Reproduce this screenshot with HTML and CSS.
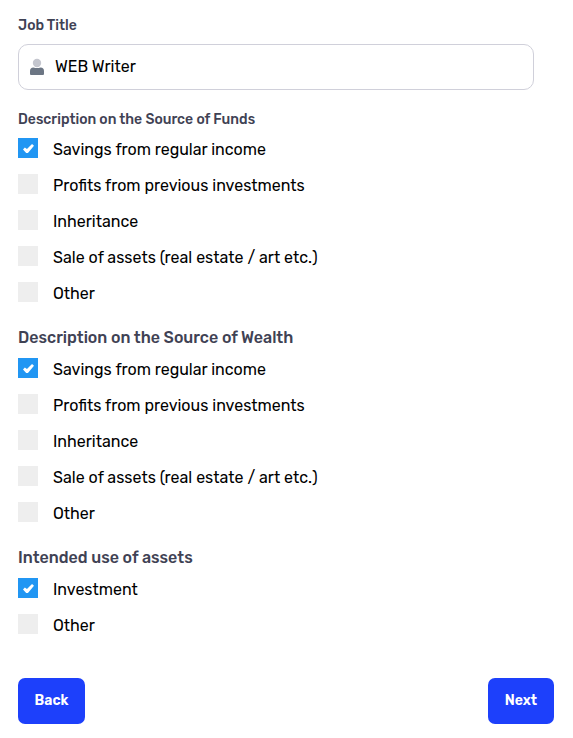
FILE: index.html
```html
<!DOCTYPE html>
<html lang="en">

<head>
<meta charset="UTF-8"/>
<meta name="viewport" content="width=device-width, initial-scale=1.0">
<title>Source of Funds</title>
<link rel="stylesheet" href="styles.css">
</head>

<body>
<form>
<label class="label small" for="job">Job Title</label>
<div class="field">
    <svg class="user" viewBox="0 0 16 18" aria-hidden="true">
        <circle class="head" cx="8" cy="5" r="4.200"/>
        <path class="torso" d="M1 16v-3a3.500 3.500 0 0 1 3.500-3.500q3.500 1 7 0a3.500 3.500 0 0 1 3.500 3.500v3q0 1-1 1H2q-1 0-1-1z"/>
    </svg>
    <input id="job" type="text" value="WEB Writer">
</div>

<fieldset class="funds">
    <legend class="label small">Description on the Source of Funds</legend>
    <label class="option"><input type="checkbox" checked><span>Savings from regular income</span></label>
    <label class="option"><input type="checkbox"><span>Profits from previous investments</span></label>
    <label class="option"><input type="checkbox"><span>Inheritance</span></label>
    <label class="option"><input type="checkbox"><span>Sale of assets (real estate / art etc.)</span></label>
    <label class="option"><input type="checkbox"><span>Other</span></label>
</fieldset>

<fieldset>
    <legend class="label">Description on the Source of Wealth</legend>
    <label class="option"><input type="checkbox" checked><span>Savings from regular income</span></label>
    <label class="option"><input type="checkbox"><span>Profits from previous investments</span></label>
    <label class="option"><input type="checkbox"><span>Inheritance</span></label>
    <label class="option"><input type="checkbox"><span>Sale of assets (real estate / art etc.)</span></label>
    <label class="option"><input type="checkbox"><span>Other</span></label>
</fieldset>

<fieldset>
    <legend class="label">Intended use of assets</legend>
    <label class="option"><input type="checkbox" checked><span>Investment</span></label>
    <label class="option"><input type="checkbox"><span>Other</span></label>
</fieldset>

<div class="buttons">
    <button type="button">Back</button>
    <button type="button">Next</button>
</div>
</form>
</body>

</html>
```
FILE: styles.css
```css
body {
    margin: 0;
    background: white;
    color: black;
    font-family: Rubik, Roboto, Arial, sans-serif;
    font-size: 16px;
}
form {
    padding: 16px 19px 0 18px;
}
.label {
    display: block;
    padding: 0;
    height: 20px;
    line-height: 20px;
    color: #3f4254;
    font-weight: 500;
}
.small {
    font-size: 14px;
}
.field {
    display: flex;
    align-items: center;
    box-sizing: border-box;
    width: 516px;
    height: 46px;
    margin-top: 8px;
    padding-left: 10px;
    border: 1px solid #d0d0da;
    border-radius: 10px;
}
.user {
    width: 16px;
    height: 18px;
}
.head {
    fill: #c4c6ce;
}
.torso {
    fill: #6c7684;
}
.field input {
    flex: 1;
    margin: 0 10px 0 10px;
    padding: 0 0 2px;
    border: 0;
    outline: 0;
    color: black;
    font: inherit;
}
fieldset {
    margin: 0 0 10px;
    padding: 0;
    border: 0;
}
legend {
    margin-bottom: 10px;
}
.funds {
    margin-top: 20px;
}
.funds legend {
    margin-bottom: 8px;
}
.option {
    display: flex;
    align-items: flex-start;
    height: 36px;
    line-height: 24px;
}
.option input {
    display: grid;
    place-items: center;
    appearance: none;
    width: 20px;
    height: 20px;
    margin: 0 15px 0 0;
    background: #eee;
}
.option input:checked {
    background: #2196f3;
}
/* tick */
.option input:checked::after {
    content: "";
    width: 11px;
    height: 9px;
    margin: 1px 0 0 1px;
    background: white;
    clip-path: polygon(0 60%, 17% 40%, 36% 56%, 82% 0, 100% 20%, 45% 100%, 29% 100%);
}
.buttons {
    display: flex;
    justify-content: space-between;
    margin-top: 28px;
}
button {
    height: 46px;
    padding: 0 17px 2px;
    border: 0;
    border-radius: 7px;
    background: #1d40fb;
    color: white;
    font: 600 14px Rubik, Roboto, Arial, sans-serif;
}
button:first-child {
    width: 67px;
    padding: 0 16px 2px;
}
```
